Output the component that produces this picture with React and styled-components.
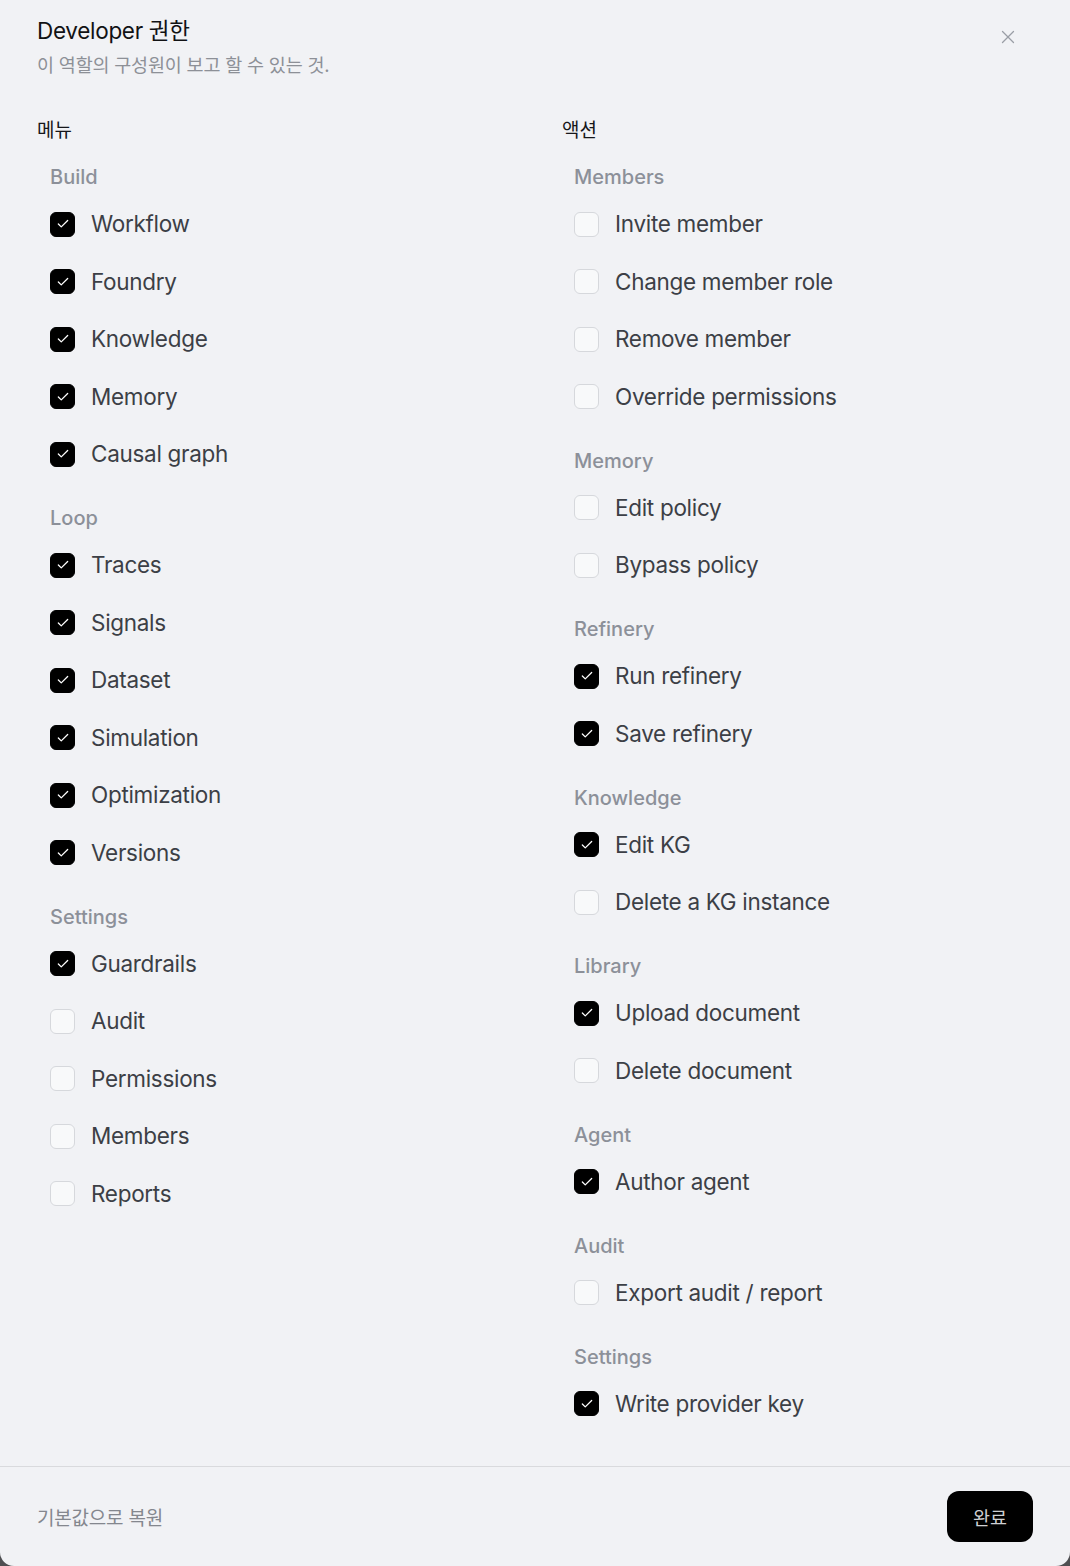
import React, { useState } from "react";
import styled, { createGlobalStyle } from "styled-components";
import { X, Check } from "lucide-react";

const GlobalStyle = createGlobalStyle`
    html, body {
        margin: 0;
        padding: 0;
        background: #4f4f52;
    }
    * {
        box-sizing: border-box;
    }
    body {
        font-family: "Inter", "Noto Sans CJK KR", sans-serif;
    }
`;

const Modal = styled.div`
    display: flex;
    flex-direction: column;
    width: 100vw;
    height: 100vh;
    min-height: 1566px;
    background-color: #f1f2f5;
    border-radius: 0 0 14px 14px;
    overflow: hidden;
`;

const Header = styled.div`
    display: flex;
    justify-content: space-between;
    align-items: flex-start;
    padding: 17px 51px 0 37px;
`;

const TitleBlock = styled.div`
    display: flex;
    flex-direction: column;
    gap: 7px;
`;

const Title = styled.h2`
    margin: 0;
    font-size: 22.5px;
    line-height: 28px;
    font-weight: 400;
    color: #111214;
    letter-spacing: -0.3px;
`;

const Subtitle = styled.p`
    margin: 0;
    font-size: 18.5px;
    line-height: 26px;
    color: #8d9097;
    letter-spacing: -0.2px;
`;

const CloseButton = styled.button`
    background: transparent;
    border: none;
    padding: 0;
    margin-top: 9px;
    color: #9a9ea6;
    display: flex;
    cursor: pointer;
`;

const Body = styled.div`
    flex: 1;
    display: grid;
    grid-template-columns: 471px 1fr;
    column-gap: 54px;
    padding: 41px 37px 0 37px;
`;

const Column = styled.div`
    display: flex;
    flex-direction: column;
`;

const SectionTitle = styled.h3`
    margin: 0 0 22px 0;
    font-size: 19px;
    line-height: 24px;
    font-weight: 400;
    color: #16171a;
`;

const Group = styled.div`
    display: flex;
    flex-direction: column;
    padding-left: ${(p) => p.$indent}px;
    margin-bottom: 23.25px;
`;

const GroupLabel = styled.div`
    font-size: 20px;
    line-height: 24px;
    font-weight: 500;
    color: #8c9099;
    margin-bottom: 6.25px;
`;

const Row = styled.label`
    display: flex;
    align-items: center;
    gap: 16px;
    height: 57.5px;
    cursor: pointer;
`;

const Box = styled.span`
    width: 25px;
    height: 25px;
    flex-shrink: 0;
    border-radius: 6px;
    display: flex;
    align-items: center;
    justify-content: center;
    background-color: ${(p) => (p.$checked ? "#000" : "#f8f9fa")};
    border: 1px solid ${(p) => (p.$checked ? "#000" : "#d6d8dc")};
    color: #fff;
`;

const RowText = styled.span`
    font-size: 22.5px;
    line-height: 28px;
    color: #3c3f46;
    letter-spacing: -0.3px;
`;

const Footer = styled.div`
    height: 100px;
    flex-shrink: 0;
    border-top: 1px solid #d9dadd;
    display: flex;
    align-items: center;
    justify-content: space-between;
    padding: 0 37px;
`;

const ResetLink = styled.button`
    background: transparent;
    border: none;
    padding: 0;
    font-family: inherit;
    font-size: 19px;
    color: #84878e;
    letter-spacing: -0.2px;
    cursor: pointer;
`;

const DoneButton = styled.button`
    width: 86px;
    height: 51px;
    border: none;
    border-radius: 12px;
    background-color: #000;
    color: #cfd0d3;
    font-family: inherit;
    font-size: 18.5px;
    cursor: pointer;
`;

const menuGroups = [
    {
        label: "Build",
        items: [
            ["Workflow", true],
            ["Foundry", true],
            ["Knowledge", true],
            ["Memory", true],
            ["Causal graph", true],
        ],
    },
    {
        label: "Loop",
        items: [
            ["Traces", true],
            ["Signals", true],
            ["Dataset", true],
            ["Simulation", true],
            ["Optimization", true],
            ["Versions", true],
        ],
    },
    {
        label: "Settings",
        items: [
            ["Guardrails", true],
            ["Audit", false],
            ["Permissions", false],
            ["Members", false],
            ["Reports", false],
        ],
    },
];

const actionGroups = [
    {
        label: "Members",
        items: [
            ["Invite member", false],
            ["Change member role", false],
            ["Remove member", false],
            ["Override permissions", false],
        ],
    },
    {
        label: "Memory",
        items: [
            ["Edit policy", false],
            ["Bypass policy", false],
        ],
    },
    {
        label: "Refinery",
        items: [
            ["Run refinery", true],
            ["Save refinery", true],
        ],
    },
    {
        label: "Knowledge",
        items: [
            ["Edit KG", true],
            ["Delete a KG instance", false],
        ],
    },
    {
        label: "Library",
        items: [
            ["Upload document", true],
            ["Delete document", false],
        ],
    },
    {
        label: "Agent",
        items: [["Author agent", true]],
    },
    {
        label: "Audit",
        items: [["Export audit / report", false]],
    },
    {
        label: "Settings",
        items: [["Write provider key", true]],
    },
];

const CheckRow = ({ text, initial }) => {
    const [checked, setChecked] = useState(initial);
    return (
        <Row onClick={() => setChecked(!checked)}>
            <Box $checked={checked}>
                {checked && <Check size={14} strokeWidth={2.2} />}
            </Box>
            <RowText>{text}</RowText>
        </Row>
    );
};

const GroupList = ({ groups, indent }) =>
    groups.map((g) => (
        <Group key={g.label} $indent={indent}>
            <GroupLabel>{g.label}</GroupLabel>
            {g.items.map(([text, on]) => (
                <CheckRow key={text} text={text} initial={on} />
            ))}
        </Group>
    ));

const App = () => {
    return (
        <>
            <GlobalStyle />
            <Modal>
                <Header>
                    <TitleBlock>
                        <Title>Developer 권한</Title>
                        <Subtitle>이 역할의 구성원이 보고 할 수 있는 것.</Subtitle>
                    </TitleBlock>
                    <CloseButton aria-label="close">
                        <X size={22} strokeWidth={1.4} />
                    </CloseButton>
                </Header>
                <Body>
                    <Column>
                        <SectionTitle>메뉴</SectionTitle>
                        <GroupList groups={menuGroups} indent={13} />
                    </Column>
                    <Column>
                        <SectionTitle>액션</SectionTitle>
                        <GroupList groups={actionGroups} indent={12} />
                    </Column>
                </Body>
                <Footer>
                    <ResetLink>기본값으로 복원</ResetLink>
                    <DoneButton>완료</DoneButton>
                </Footer>
            </Modal>
        </>
    );
};

export default App;
